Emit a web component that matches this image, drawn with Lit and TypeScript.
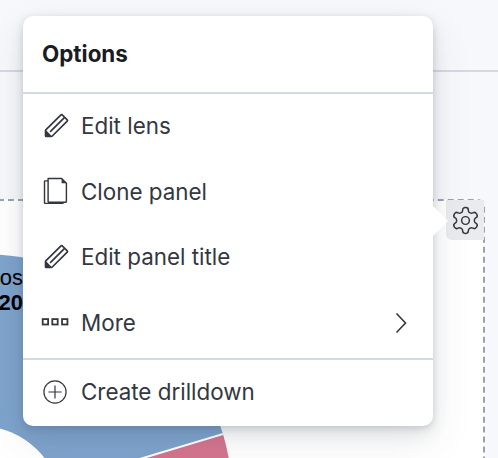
import { LitElement, html, css, svg } from 'lit';
import { customElement } from 'lit/decorators.js';

const pencil = svg`<path d="M12.148 3.148L11 2l-9 9v3h3l9-9-1.144-1.144-8.002 7.998a.502.502 0 01-.708 0 .502.502 0 010-.708l8.002-7.998zM11 1c.256 0 .512.098.707.293l3 3a.999.999 0 010 1.414l-9 9A.997.997 0 015 15H2a1 1 0 01-1-1v-3c0-.265.105-.52.293-.707l9-9A.997.997 0 0111 1zM5 14H2v-3l3 3z" fill="currentColor"/>`;

const copy = svg`<g fill="none" stroke="currentColor" stroke-width=".95" stroke-linejoin="round">
  <path d="M3.4 -1h9l3.2 3.2v12.3a.3.3 0 01-.3.3H3.7a.3.3 0 01-.3-.3z"/>
  <path d="M3.4 .6H1.3a.3.3 0 00-.3.3v14.4a.3.3 0 00.3.3h12v-.8"/>
  </g><path d="M12.4 -1l3.2 3.2h-3.2z" fill="currentColor"/>`;

const boxes = svg`<g fill="none" stroke="currentColor" stroke-width="1.2">
  <rect x="-.2" y="5.4" width="3.6" height="3.6"/>
  <rect x="6.2" y="5.4" width="3.6" height="3.6"/>
  <rect x="12.7" y="5.4" width="3.6" height="3.6"/></g>`;

const plusCircle = svg`<g fill="none" stroke="currentColor" stroke-width=".8">
  <circle cx="8" cy="8" r="7.4"/><path d="M8 3.6v8.8M3.6 8h8.8"/></g>`;

const items = [
  { icon: pencil, label: 'Edit lens', big: true },
  { icon: copy, label: 'Clone panel' },
  { icon: pencil, label: 'Edit panel title', big: true },
  { icon: boxes, label: 'More', more: true },
];

@customElement('app-root')
export class AppRoot extends LitElement {
  static styles = css`
    :host {
      display: block;
      position: relative;
      width: 498px;
      height: 458px;
      overflow: hidden;
      background: #f7f8fb;
      font-family: Inter, 'Liberation Sans', sans-serif;
    }

    .rule {
      position: absolute;
      top: 70px;
      left: 0;
      right: 0;
      height: 2px;
      background: #d3dae6;
    }

    .panel {
      position: absolute;
      left: -10px;
      top: 199px;
      width: 495px;
      height: 300px;
      box-sizing: border-box;
      background: #fff;
      border: 2px dashed #98a2b3;
      border-radius: 8px;
    }

    .pie {
      position: absolute;
      left: 0;
      top: 0;
    }

    .chart-label {
      position: absolute;
      right: 475px;
      font-size: 22px;
      line-height: 24px;
      color: #000;
      font-family: 'Liberation Sans', sans-serif;
    }

    .chart-label.first {
      top: 266px;
    }

    .chart-label.second {
      top: 291px;
      font-weight: 700;
    }

    .gear {
      position: absolute;
      left: 446px;
      top: 200px;
      width: 38px;
      height: 40px;
      display: flex;
      align-items: center;
      justify-content: center;
      background: #e9ebee;
      border-bottom-left-radius: 6px;
      color: #343741;
    }

    .menu {
      position: absolute;
      left: 23px;
      top: 16px;
      width: 410px;
      height: 410px;
      display: flex;
      flex-direction: column;
      background: #fff;
      border-radius: 10px;
      box-shadow: 0 2px 6px rgba(60, 66, 82, 0.16), 0 6px 16px rgba(60, 66, 82, 0.12),
        0 16px 40px rgba(60, 66, 82, 0.1);
    }

    .arrow {
      position: absolute;
      left: 410px;
      top: 190px;
      width: 0;
      height: 0;
      border-left: 15px solid #fff;
      border-top: 15px solid transparent;
      border-bottom: 15px solid transparent;
    }

    .title {
      height: 74px;
      display: flex;
      align-items: center;
      padding: 0 0 2px 19px;
      font-size: 22.4px;
      font-weight: 700;
      color: #1a1c21;
      border-bottom: 2px solid #d3dae6;
    }

    .list {
      display: flex;
      flex-direction: column;
      padding-bottom: 2px;
      border-bottom: 2px solid #d3dae6;
    }

    .item {
      height: 65.5px;
      display: flex;
      align-items: center;
      gap: 14px;
      padding: 0 26px 0 20px;
      font-size: 22.4px;
      color: #343741;
    }

    .item svg {
      overflow: visible;
    }

    .item .big {
      width: 27px;
      height: 27px;
      margin: -3.5px -2.5px -0.5px -0.5px;
    }

    .footer {
      flex: 1;
      padding-bottom: 2px;
    }

    .item span {
      flex: 1;
      padding-bottom: 2px;
    }
  `;

  render() {
    return html`
      <div class="rule"></div>
      <div class="panel"></div>
      <svg class="pie" width="498" height="458" viewBox="0 0 498 458">
        <path d="M-20 254A253 253 0 01223 434L-20 507z" fill="#7ea3cc"/>
        <path d="M223 434A253 253 0 01233 507H-20z" fill="#d4748f"/>
        <path d="M-20 507L223 434" stroke="#fff" stroke-width="2"/>
        <circle cx="-20" cy="507" r="81" fill="#fff"/>
      </svg>
      <div class="chart-label first">os</div>
      <div class="chart-label second">20</div>
      <div class="gear">
        <svg width="31" height="31" viewBox="0 0 24 24" fill="none" stroke="currentColor" stroke-width="1.15">
          <path d="M12.22 2h-.44a2 2 0 0 0-2 2v.18a2 2 0 0 1-1 1.73l-.43.25a2 2 0 0 1-2 0l-.15-.08a2 2 0 0 0-2.73.73l-.22.38a2 2 0 0 0 .73 2.73l.15.1a2 2 0 0 1 1 1.72v.51a2 2 0 0 1-1 1.74l-.15.09a2 2 0 0 0-.73 2.73l.22.38a2 2 0 0 0 2.73.73l.15-.08a2 2 0 0 1 2 0l.43.25a2 2 0 0 1 1 1.73V20a2 2 0 0 0 2 2h.44a2 2 0 0 0 2-2v-.18a2 2 0 0 1 1-1.73l.43-.25a2 2 0 0 1 2 0l.15.08a2 2 0 0 0 2.73-.73l.22-.39a2 2 0 0 0-.73-2.73l-.15-.08a2 2 0 0 1-1-1.74v-.5a2 2 0 0 1 1-1.74l.15-.09a2 2 0 0 0 .73-2.73l-.22-.38a2 2 0 0 0-2.73-.73l-.15.08a2 2 0 0 1-2 0l-.43-.25a2 2 0 0 1-1-1.73V4a2 2 0 0 0-2-2z"/>
          <circle cx="12" cy="12" r="3"/>
        </svg>
      </div>
      <div class="menu">
        <div class="arrow"></div>
        <div class="title">Options</div>
        <div class="list">
          ${items.map(
            (item) => html`
              <div class="item">
                <svg class=${item.big ? 'big' : ''} width="24" height="24" viewBox="0 0 16 16">${item.icon}</svg>
                <span>${item.label}</span>
                ${item.more
                  ? html`<svg width="12" height="22" viewBox="0 0 12 22" fill="none" stroke="currentColor" stroke-width="1.6">
                      <path d="M1.5 1.5L10.5 11 1.5 20.5"/>
                    </svg>`
                  : ''}
              </div>
            `
          )}
        </div>
        <div class="item footer">
          <svg width="24" height="24" viewBox="0 0 16 16">${plusCircle}</svg>
          <span>Create drilldown</span>
        </div>
      </div>
    `;
  }
}
